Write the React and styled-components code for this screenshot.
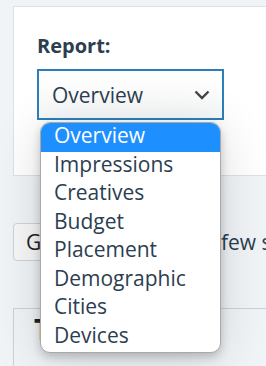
import React from "react";
import styled, { createGlobalStyle } from "styled-components";

const Global = createGlobalStyle`
  html, body { margin: 0; padding: 0; }
  body {
    background: #f0f4f7;
    font-family: "Open Sans", "Noto Sans", sans-serif;
    color: #2c3e50;
    overflow: hidden;
  }
`;

const Page = styled.div`
  position: relative;
  width: 266px;
  height: 366px;
  padding: 6px 0 0 13px;
  box-sizing: border-box;
  overflow: hidden;
`;

const Card = styled.section`
  background: #fff;
  border: 1px solid #dde1e5;
  border-right: none;
  height: 170px;
  box-sizing: border-box;
  padding: 26px 0 0 23px;
  width: 300px;
`;

const Label = styled.div`
  font-weight: 700;
  font-size: 20px;
  line-height: 26px;
  color: #2c3e50;
  margin-bottom: 10px;
`;

const SelectBox = styled.div`
  width: 187px;
  height: 51px;
  box-sizing: border-box;
  border: 2px solid #2b80b9;
  background: linear-gradient(#ffffff, #f7f8f9);
  display: flex;
  align-items: center;
  justify-content: space-between;
  padding: 0 12px 0 13px;
  font-size: 21px;
  color: #2c3e50;
`;

const Toolbar = styled.div`
  display: flex;
  align-items: center;
  margin-top: 47px;
  height: 38px;
  white-space: nowrap;
`;

const Button = styled.button`
  flex: none;
  height: 38px;
  width: 130px;
  border: 1px solid #cdd3d8;
  border-radius: 4px;
  background: #f7f7f7;
  font-family: inherit;
  font-size: 21px;
  color: #222;
  text-align: left;
  padding: 0 0 0 12px;
  white-space: nowrap;
  overflow: hidden;
`;

const Updated = styled.span`
  flex: none;
  font-size: 21px;
  color: #2c3e50;
  white-space: nowrap;
  margin-left: 78px;
`;

const Panel = styled.section`
  margin-top: 47px;
  border: 1px solid #c7d2dc;
  border-right: none;
  height: 80px;
  width: 300px;
  padding: 0 0 0 20px;
  box-sizing: border-box;
`;

const PanelTitle = styled.h2`
  margin: 0;
  font-size: 28px;
  line-height: 40px;
  font-weight: 700;
  color: #222;
`;

const Menu = styled.ul`
  position: absolute;
  left: 40px;
  top: 122px;
  width: 181px;
  margin: 0;
  padding: 0 0 1px;
  list-style: none;
  background: #fff;
  border: 1px solid #a9a9a9;
  border-radius: 10px;
  overflow: hidden;
  box-sizing: border-box;
  box-shadow: 0 4px 10px rgba(0, 0, 0, 0.2), 0 6px 50px rgba(0, 0, 0, 0.14);
`;

const Item = styled.li`
  height: 28.5px;
  line-height: 25px;
  font-size: 21px;
  padding-left: 13px;
  background: ${(p) => (p.$active ? "#1e8fff" : "transparent")};
  color: ${(p) => (p.$active ? "#fff" : "#2c3e50")};
`;

const items = [
  "Overview",
  "Impressions",
  "Creatives",
  "Budget",
  "Placement",
  "Demographic",
  "Cities",
  "Devices",
];

export default function App() {
  return (
    <>
      <Global />
      <Page>
        <Card>
          <Label>Report:</Label>
          <SelectBox>
            <span>Overview</span>
            <svg width="16" height="10" viewBox="0 0 16 10">
              <path
                d="M1.5 1.5 L8 8 L14.5 1.5"
                fill="none"
                stroke="#444"
                strokeWidth="2.4"
              />
            </svg>
          </SelectBox>
        </Card>
        <Toolbar>
          <Button>Get report</Button>
          <Updated>few seconds ago</Updated>
        </Toolbar>
        <Panel>
          <PanelTitle>Today, July</PanelTitle>
        </Panel>
        <Menu>
          {items.map((t, i) => (
            <Item key={t} $active={i === 0}>
              {t}
            </Item>
          ))}
        </Menu>
      </Page>
    </>
  );
}
